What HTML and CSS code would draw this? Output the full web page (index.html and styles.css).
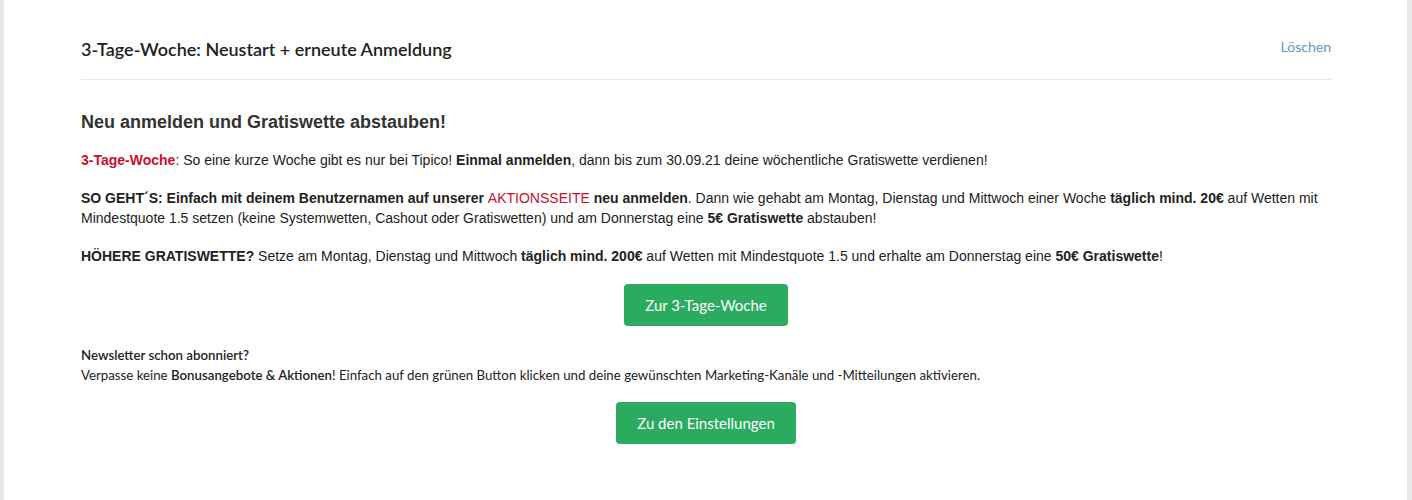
FILE: index.html
```html
<!DOCTYPE html>
<html>
<head>
    <title>3-Tage-Woche</title>
    <link rel="stylesheet" href="styles.css">
</head>
<body>
    <div class="card">
        <div class="card-header">
            <h2 class="card-title">3-Tage-Woche: Neustart + erneute Anmeldung</h2>
            <a class="delete-link" href="#">Löschen</a>
        </div>
        <div class="card-body">
            <h3 class="promo-title">Neu anmelden und Gratiswette abstauben!</h3>
            <p class="promo-text"><span class="red">3-Tage-Woche</span>: So eine kurze Woche gibt es nur bei Tipico! <b>Einmal anmelden</b>, dann bis zum 30.09.21 deine wöchentliche Gratiswette verdienen!</p>
            <p class="promo-text"><b>SO GEHT´S: Einfach mit deinem Benutzernamen auf unserer <span class="red red-plain">AKTIONSSEITE</span> neu anmelden</b>. Dann wie gehabt am Montag, Dienstag und Mittwoch einer Woche <b>täglich mind. 20€</b> auf Wetten mit Mindestquote 1.5 setzen (keine Systemwetten, Cashout oder Gratiswetten) und am Donnerstag eine <b>5€ Gratiswette</b> abstauben!</p>
            <p class="promo-text"><b>HÖHERE GRATISWETTE?</b> Setze am Montag, Dienstag und Mittwoch <b>täglich mind. 200€</b> auf Wetten mit Mindestquote 1.5 und erhalte am Donnerstag eine <b>50€ Gratiswette</b>!</p>
            <div class="btn-row">
                <a class="btn-green" href="#">Zur 3-Tage-Woche</a>
            </div>
            <div class="newsletter">
                <div class="newsletter-title">Newsletter schon abonniert?</div>
                <div>Verpasse keine <b>Bonusangebote &amp; Aktionen</b>! Einfach auf den grünen Button klicken und deine gewünschten Marketing-Kanäle und -Mitteilungen aktivieren.</div>
            </div>
            <div class="btn-row">
                <a class="btn-green" href="#">Zu den Einstellungen</a>
            </div>
        </div>
    </div>
</body>
</html>
```

FILE: styles.css
```css
body {
    margin: 0;
    background-color: #e9e9e9;
    font-family: "Lato", "Liberation Sans", sans-serif;
    color: #333;
}
.card {
    background-color: #fff;
    margin: 0 5px 0 4px;
    padding: 0 76px 60px 77px;
    min-height: 500px;
    box-sizing: border-box;
}
.card-header {
    display: flex;
    justify-content: space-between;
    align-items: flex-start;
    padding-top: 38px;
    padding-bottom: 19px;
    border-bottom: 1px solid #e5e5e5;
}
.card-title {
    margin: 0;
    font-size: 18px;
    line-height: 22px;
    font-weight: 600;
    color: #222;
}
.delete-link {
    margin-top: -1px;
    font-size: 14px;
    line-height: 20px;
    color: #5b9bbf;
    text-decoration: none;
}
.card-body {
    font-family: "Liberation Sans", Arial, sans-serif;
    font-size: 14px;
    color: #222;
}
.promo-title {
    margin: 31px 0 17px;
    font-size: 18px;
    line-height: 22px;
    font-weight: bold;
    color: #333;
}
.promo-text {
    margin: 0 0 18px;
    line-height: 20px;
}
.red {
    color: #c8102e;
    font-weight: bold;
}
.red-plain {
    font-weight: normal;
}
.btn-row {
    display: flex;
    justify-content: center;
}
.btn-green {
    display: inline-block;
    height: 42px;
    line-height: 42px;
    padding: 0 21px;
    background-color: #2aab5f;
    color: #fff;
    border-radius: 4px;
    text-decoration: none;
    font-family: "Lato", sans-serif;
    font-size: 15px;
}
.newsletter {
    margin: 19px 0 17px;
    font-family: "Lato", sans-serif;
    font-size: 13.25px;
    line-height: 20px;
}
.newsletter-title {
    font-weight: 600;
}
.newsletter b {
    font-weight: 600;
}
```
